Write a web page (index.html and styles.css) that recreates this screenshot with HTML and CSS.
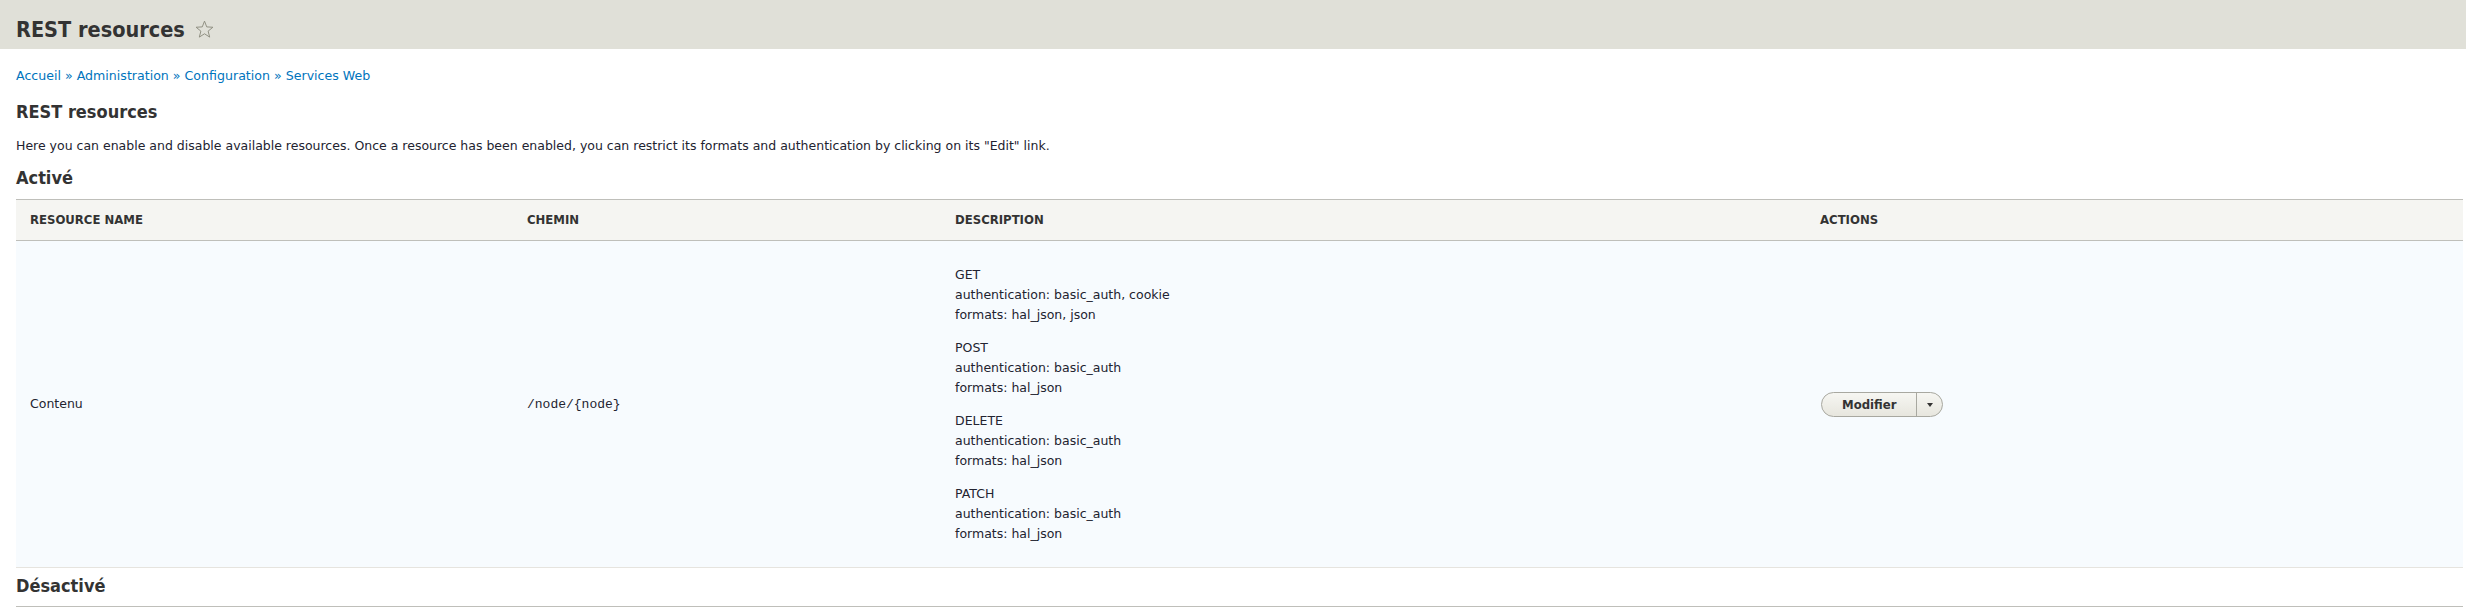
FILE: index.html
```html
<!DOCTYPE html>
<html lang="fr">
<head>
<meta charset="utf-8">
<title>REST resources</title>
<link rel="stylesheet" href="styles.css">
</head>
<body>
<header class="page-header">
  <h1 class="page-title">REST resources
    <svg class="star" viewBox="0 0 20 20" width="19" height="19" aria-hidden="true"><polygon points="10,1.2 12.35,7.26 18.84,7.63 13.8,11.74 15.47,18.02 10,14.5 4.53,18.02 6.2,11.74 1.16,7.63 7.65,7.26" fill="none" stroke="#8c8c7e" stroke-width="1" stroke-linejoin="round"/></svg>
  </h1>
</header>
<main class="content">
  <nav class="breadcrumb"><a href="#">Accueil</a> » <a href="#">Administration</a> » <a href="#">Configuration</a> » <a href="#">Services Web</a></nav>
  <h2 class="section-title first">REST resources</h2>
  <p class="intro">Here you can enable and disable available resources. Once a resource has been enabled, you can restrict its formats and authentication by clicking on its "Edit" link.</p>
  <h2 class="section-title">Activé</h2>
  <table class="resources">
    <colgroup>
      <col class="col-name">
      <col class="col-path">
      <col class="col-desc">
      <col class="col-actions">
    </colgroup>
    <thead>
      <tr><th>Resource name</th><th>Chemin</th><th>Description</th><th>Actions</th></tr>
    </thead>
    <tbody>
      <tr>
        <td>Contenu</td>
        <td><code class="path">/node/{node}</code></td>
        <td>
          <div class="methods">
            <div class="method"><div>GET</div><div>authentication: basic_auth, cookie</div><div>formats: hal_json, json</div></div>
            <div class="method"><div>POST</div><div>authentication: basic_auth</div><div>formats: hal_json</div></div>
            <div class="method"><div>DELETE</div><div>authentication: basic_auth</div><div>formats: hal_json</div></div>
            <div class="method"><div>PATCH</div><div>authentication: basic_auth</div><div>formats: hal_json</div></div>
          </div>
        </td>
        <td>
          <div class="dropbutton">
            <span class="dropbutton-action">Modifier</span>
            <span class="dropbutton-toggle"><span class="caret"></span></span>
          </div>
        </td>
      </tr>
    </tbody>
  </table>
  <h2 class="section-title disabled">Désactivé</h2>
  <div class="table-rule"></div>
</main>
</body>
</html>
```
FILE: styles.css
```css
html, body {
  margin: 0;
  padding: 0;
  background: #fff;
}
body {
  font-family: "DejaVu Sans", "Liberation Sans", sans-serif;
  font-size: 12.5px;
  line-height: 20px;
  color: #222330;
  overflow: hidden;
}
.page-header {
  background: #e0e0d8;
  height: 49px;
  padding: 17px 0 0 16px;
  box-sizing: border-box;
}
.page-title {
  margin: 0;
  font-family: "DejaVu Sans Condensed", "DejaVu Sans", sans-serif;
  font-stretch: condensed;
  font-weight: bold;
  font-size: 21.5px;
  line-height: 26px;
  color: #333;
  display: flex;
  align-items: center;
  gap: 10px;
}
.star {
  display: block;
  margin-top: -1px;
}
.content {
  padding: 17px 3px 0 16px;
}
.breadcrumb {
  font-size: 12.6px;
  line-height: 20px;
  color: #0074bd;
}
.breadcrumb a {
  color: #0074bd;
  text-decoration: none;
}
.section-title {
  margin: 11px 0 0;
  font-family: "DejaVu Sans Condensed", "DejaVu Sans", sans-serif;
  font-stretch: condensed;
  font-weight: bold;
  font-size: 18px;
  line-height: 22px;
  color: #333;
}
.section-title.first {
  margin-top: 15px;
}
.intro {
  margin: 13px 0 0;
  line-height: 20px;
}
.resources {
  margin-top: 10px;
  width: 2447px;
  border-collapse: collapse;
  table-layout: fixed;
}
.col-name { width: 497px; }
.col-path { width: 428px; }
.col-desc { width: 865px; }
.col-actions { width: 657px; }
.resources th {
  background: #f5f5f2;
  border-top: 1px solid #bfbfba;
  border-bottom: 1px solid #bfbfba;
  padding: 10px 14px;
  text-align: left;
  text-transform: uppercase;
  font-family: "DejaVu Sans Condensed", "DejaVu Sans", sans-serif;
  font-stretch: condensed;
  font-weight: bold;
  font-size: 13px;
  line-height: 20px;
  color: #333;
}
.resources td {
  background: #f7fbfe;
  border-bottom: 1px solid #e6e4df;
  padding: 10px 14px;
  vertical-align: middle;
}
.path {
  font-family: "Liberation Mono", "DejaVu Sans Mono", monospace;
  font-size: 13px;
}
.methods {
  display: flex;
  flex-direction: column;
  gap: 13px;
  padding: 14px 0 13px;
}
.dropbutton {
  display: inline-flex;
  align-items: stretch;
  height: 25px;
  box-sizing: border-box;
  margin-left: 1px;
  border: 1px solid #a8a8a0;
  border-radius: 13px;
  background: linear-gradient(#f6f6f2, #e7e6de);
  overflow: hidden;
}
.dropbutton-action {
  padding: 0 20px 0 20px;
  font-family: "DejaVu Sans Condensed", "DejaVu Sans", sans-serif;
  font-stretch: condensed;
  font-weight: bold;
  font-size: 13px;
  line-height: 23px;
  color: #333;
}
.dropbutton-toggle {
  width: 25px;
  border-left: 1px solid #a8a8a0;
  display: flex;
  align-items: center;
  justify-content: center;
}
.caret {
  width: 0;
  height: 0;
  border-left: 3.5px solid transparent;
  border-right: 3.5px solid transparent;
  border-top: 4px solid #333;
  margin-top: 1px;
}
.section-title.disabled {
  margin-top: 7px;
}
.table-rule {
  margin-top: 9px;
  width: 2447px;
  border-top: 1px solid #bfbfba;
  height: 20px;
}
```
